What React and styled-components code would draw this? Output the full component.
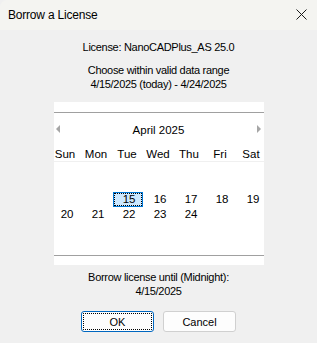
import React from "react"
import styled, { createGlobalStyle } from "styled-components"

const Global = createGlobalStyle`
  html, body {
    margin: 0;
    padding: 0;
    background: #f0f0f0;
  }
`

const Window = styled.div`
  width: 317px;
  height: 343px;
  background: #f0f0f0;
  font-family: "Liberation Sans", Arial, sans-serif;
  color: #000;
  overflow: hidden;
  display: flex;
  flex-direction: column;
`

const TitleBar = styled.div`
  height: 30px;
  background: #f4f4f1;
  border-top-left-radius: 7px;
  display: flex;
  align-items: center;
  justify-content: space-between;
  padding: 0 10px 0 8px;
  font-size: 12px;
  letter-spacing: -0.2px;
`

const CloseIcon = styled.svg`
  width: 11px;
  height: 11px;
  margin-top: -2px;
`

const Body = styled.div`
  display: flex;
  flex-direction: column;
  align-items: center;
  font-size: 11px;
  letter-spacing: -0.3px;
  line-height: 14px;
`

const Line = styled.div`
  text-align: center;
  margin-top: ${p => p.$top || 0}px;
`

const Calendar = styled.div`
  width: 210px;
  height: 163px;
  margin-top: 11px;
  background: #fff;
  padding-top: 10px;
  box-sizing: border-box;
  font-size: 11.5px;
  letter-spacing: 0;
`

const Rule = styled.div`
  height: 1px;
  background: #a0a0a0;
`

const Header = styled.div`
  height: 33px;
  display: flex;
  align-items: center;
  justify-content: space-between;
  padding: 0 2px;
`

const Arrow = styled.span`
  width: 0;
  height: 0;
  border-top: 4px solid transparent;
  border-bottom: 4px solid transparent;
  ${p => (p.$dir === "left" ? "border-right: 4px solid #a6a6a6;" : "border-left: 4px solid #a6a6a6;")}
  margin-top: -2px;
`

const Grid = styled.div`
  display: grid;
  grid-template-columns: repeat(7, 31px);
  margin-left: -4px;
  width: 217px;
`

const DayNames = styled(Grid)`
  height: 15px;
  border-bottom: 1px solid #f0f0f0;
  align-items: center;
`

const DayName = styled.div`
  text-align: center;
  line-height: 14px;
`

const Weeks = styled(Grid)`
  grid-auto-rows: 15px;
  margin-bottom: 3px;
`

const Cell = styled.div`
  text-align: right;
  padding-right: 7px;
  line-height: 14px;
  box-sizing: border-box;
  ${p =>
    p.$selected &&
    `
    background: #cce8ff;
    border: 1px solid #0078d7;
    outline: 1px dotted #000;
    outline-offset: -2px;
    padding-right: 6px;
    line-height: 12px;
    margin-left: 1px;
    margin-right: 0;
  `}
`

const Buttons = styled.div`
  display: flex;
  gap: 9px;
  margin-top: 13px;
`

const Button = styled.button`
  width: 73px;
  height: 21px;
  font-family: "Liberation Sans", Arial, sans-serif;
  font-size: 11px;
  color: #000;
  background: #fdfdfd;
  border: 1px solid ${p => (p.$primary ? "#0067c0" : "#d0d0d0")};
  border-radius: 3px;
  padding: 0;
  ${p => p.$primary && `outline: 1px dotted #000; outline-offset: -3px;`}
`

const names = ["Sun", "Mon", "Tue", "Wed", "Thu", "Fri", "Sat"]
const weeks = [
  [null, null, null, null, null, null, null],
  [null, null, null, null, null, null, null],
  [null, null, 15, 16, 17, 18, 19],
  [20, 21, 22, 23, 24, null, null],
  [null, null, null, null, null, null, null],
  [null, null, null, null, null, null, null],
]

export default function App() {
  return (
    <>
      <Global />
      <Window>
        <TitleBar>
          <span>Borrow a License</span>
          <CloseIcon viewBox="0 0 11 11">
            <path d="M0.5 0.5 L10.5 10.5 M10.5 0.5 L0.5 10.5" stroke="#1a1a1a" strokeWidth="1" />
          </CloseIcon>
        </TitleBar>
        <Body>
          <Line $top={10}>License: NanoCADPlus_AS 25.0</Line>
          <Line $top={9}>Choose within valid data range</Line>
          <Line>4/15/2025 (today) - 4/24/2025</Line>
          <Calendar>
            <Rule />
            <Header>
              <Arrow $dir="left" />
              <span>April 2025</span>
              <Arrow $dir="right" />
            </Header>
            <DayNames>
              {names.map(n => (
                <DayName key={n}>{n}</DayName>
              ))}
            </DayNames>
            <Weeks>
              {weeks.flat().map((d, i) => (
                <Cell key={i} $selected={d === 15}>
                  {d}
                </Cell>
              ))}
            </Weeks>
            <Rule />
          </Calendar>
          <Line $top={5}>Borrow license until (Midnight):</Line>
          <Line>4/15/2025</Line>
          <Buttons>
            <Button $primary>OK</Button>
            <Button>Cancel</Button>
          </Buttons>
        </Body>
      </Window>
    </>
  )
}
